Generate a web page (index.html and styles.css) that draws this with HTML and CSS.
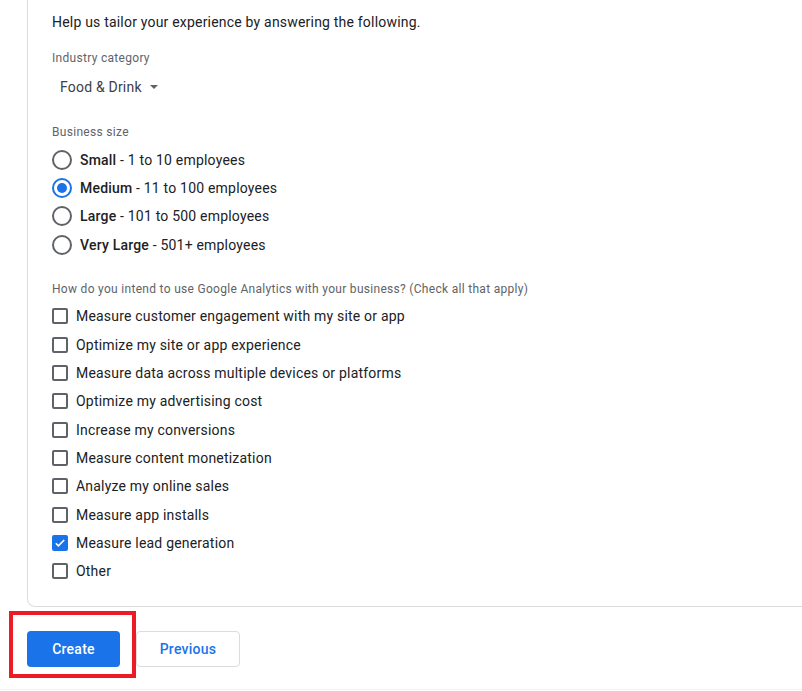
FILE: index.html
```html
<!DOCTYPE html>
<html lang="en">
<head>
    <meta charset="UTF-8">
    <meta name="viewport" content="width=device-width, initial-scale=1.0">
    <title>Create property - About your business</title>
    <link rel="stylesheet" href="styles.css">
</head>
<body>
    <div class="card">
        <p class="intro">Help us tailor your experience by answering the following.</p>

        <div class="field-label">Industry category</div>
        <div class="dropdown">
            <span>Food &amp; Drink</span>
            <span class="caret"></span>
        </div>

        <div class="field-label size-label">Business size</div>
        <div class="options">
            <label class="option"><span class="radio"></span><span><b>Small</b> - 1 to 10 employees</span></label>
            <label class="option"><span class="radio checked"></span><span><b>Medium</b> - 11 to 100 employees</span></label>
            <label class="option"><span class="radio"></span><span><b>Large</b> - 101 to 500 employees</span></label>
            <label class="option"><span class="radio"></span><span><b>Very Large</b> - 501+ employees</span></label>
        </div>

        <div class="field-label usage-label">How do you intend to use Google Analytics with your business? (Check all that apply)</div>
        <div class="options">
            <label class="option check"><span class="box"></span><span>Measure customer engagement with my site or app</span></label>
            <label class="option check"><span class="box"></span><span>Optimize my site or app experience</span></label>
            <label class="option check"><span class="box"></span><span>Measure data across multiple devices or platforms</span></label>
            <label class="option check"><span class="box"></span><span>Optimize my advertising cost</span></label>
            <label class="option check"><span class="box"></span><span>Increase my conversions</span></label>
            <label class="option check"><span class="box"></span><span>Measure content monetization</span></label>
            <label class="option check"><span class="box"></span><span>Analyze my online sales</span></label>
            <label class="option check"><span class="box"></span><span>Measure app installs</span></label>
            <label class="option check">
                <span class="box checked">
                    <svg width="12" height="12" viewBox="0 0 12 12"><path d="M1.8 6.2l2.6 2.6 5.8-5.8" fill="none" stroke="#fff" stroke-width="1.6"/></svg>
                </span>
                <span>Measure lead generation</span>
            </label>
            <label class="option check"><span class="box"></span><span>Other</span></label>
        </div>
    </div>

    <div class="actions">
        <button class="btn primary">Create</button>
        <button class="btn secondary">Previous</button>
        <div class="highlight"></div>
    </div>

    <div class="page-footer"></div>
</body>
</html>
```

FILE: styles.css
```css
body {
    margin: 0;
    overflow: hidden;
    background-color: #fff;
    font-family: Roboto, 'Liberation Sans', Arial, sans-serif;
    color: #202124;
    font-size: 14px;
}
.card {
    margin-left: 27px;
    width: 820px;
    padding: 12px 24px 20px;
    border: 1px solid #dadce0;
    border-top: none;
    border-radius: 0 0 8px 8px;
}
.intro {
    margin: 0;
    line-height: 20px;
    letter-spacing: 0.2px;
}
.field-label {
    margin-top: 18px;
    font-size: 12px;
    line-height: 16px;
    color: #5f6368;
    letter-spacing: 0.3px;
}
.dropdown {
    display: inline-flex;
    align-items: center;
    height: 36px;
    padding: 0 8px;
    margin-top: 3px;
    line-height: 20px;
    color: #3c4043;
    letter-spacing: 0.2px;
}
.caret {
    width: 0;
    height: 0;
    margin-left: 8px;
    border-left: 4px solid transparent;
    border-right: 4px solid transparent;
    border-top: 4px solid #5f6368;
}
.size-label {
    margin-top: 19px;
}
.usage-label {
    margin-top: 22px;
}
.options {
    margin-top: 5.5px;
}
.option {
    display: flex;
    align-items: center;
    height: 28.33px;
    line-height: 20px;
    color: #202124;
    letter-spacing: 0.2px;
}
.option b {
    font-weight: 500;
}
.radio {
    box-sizing: border-box;
    width: 20px;
    height: 20px;
    margin-right: 8px;
    border: 2px solid #5f6368;
    border-radius: 50%;
    display: flex;
    align-items: center;
    justify-content: center;
}
.radio.checked {
    border-color: #1a73e8;
}
.radio.checked::after {
    content: "";
    width: 10px;
    height: 10px;
    border-radius: 50%;
    background-color: #1a73e8;
}
.box {
    box-sizing: border-box;
    width: 16px;
    height: 16px;
    margin-right: 8px;
    border: 2px solid #5f6368;
    border-radius: 2px;
    display: flex;
    align-items: center;
    justify-content: center;
}
.box.checked {
    border-color: #1a73e8;
    background-color: #1a73e8;
}
.actions {
    position: relative;
    display: flex;
    gap: 16px;
    margin: 24px 0 0 27px;
}
.btn {
    height: 36px;
    border-radius: 4px;
    font-family: Roboto, 'Liberation Sans', Arial, sans-serif;
    font-size: 14px;
    font-weight: 500;
    letter-spacing: 0.25px;
    cursor: pointer;
}
.primary {
    width: 93px;
    border: none;
    background-color: #1a73e8;
    color: #fff;
}
.secondary {
    width: 104px;
    border: 1px solid #dadce0;
    background-color: #fff;
    color: #1a73e8;
}
.highlight {
    position: absolute;
    left: -18px;
    top: -20px;
    width: 119px;
    height: 59px;
    border: 4px solid #ed1c24;
}
.page-footer {
    margin-top: 22px;
    border-top: 1px solid #f1f3f4;
    height: 10px;
}
```
